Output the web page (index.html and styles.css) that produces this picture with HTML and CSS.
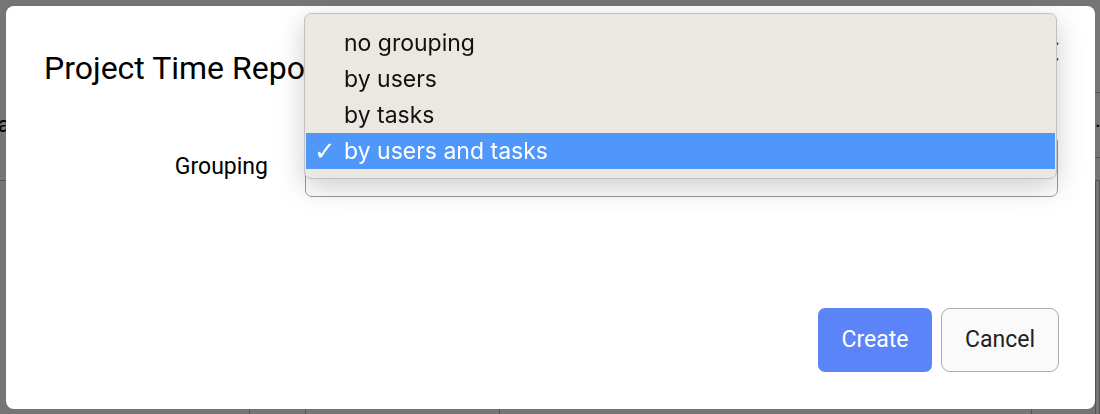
FILE: index.html
```html
<!DOCTYPE html>
<html lang="en">
<head>
    <meta charset="UTF-8">
    <meta name="viewport" content="width=device-width, initial-scale=1.0">
    <title>Project Time Report</title>
    <link rel="stylesheet" href="styles.css">
</head>
<body>
    <div class="page">
        <table class="page-table">
            <tr class="row-a">
                <td class="c1"></td><td class="c2"></td><td class="c3"></td><td class="c4"></td><td class="c5"></td><td class="c6"></td>
            </tr>
            <tr class="row-b">
                <td class="c1">Na</td><td class="c2"></td><td class="c3"></td><td class="c4"></td><td class="c5"></td><td class="c6">.</td>
            </tr>
            <tr class="row-c">
                <td class="c1"></td><td class="c2"></td><td class="c3"></td><td class="c4"></td><td class="c5"></td><td class="c6"></td>
            </tr>
            <tr class="row-d">
                <td class="c1"></td><td class="c2"></td><td class="c3"></td><td class="c4"></td><td class="c5"></td><td class="c6"></td>
            </tr>
        </table>
    </div>
    <div class="overlay"></div>

    <div class="modal">
        <div class="modal-header">
            <h1 class="modal-title">Project Time Report</h1>
            <a class="modal-close" href="javascript:void(0)">
                <svg width="20" height="19" viewBox="0 0 20 19"><path d="M1 1 L19 18 M19 1 L1 18" stroke="#333" stroke-width="2" fill="none"/></svg>
            </a>
        </div>
        <div class="modal-body">
            <div class="form-row">
                <label class="form-label">Grouping</label>
                <div class="form-select">by users and tasks</div>
            </div>
        </div>
        <div class="modal-footer">
            <a class="btn btn-primary" href="javascript:void(0)">Create</a>
            <a class="btn btn-default" href="javascript:void(0)">Cancel</a>
        </div>
    </div>

    <ul class="select-menu">
        <li class="select-item">no grouping</li>
        <li class="select-item">by users</li>
        <li class="select-item">by tasks</li>
        <li class="select-item active"><span class="select-check">&#10003;</span>by users and tasks</li>
    </ul>
</body>
</html>
```

FILE: styles.css
```css
* {
    margin: 0;
    padding: 0;
    list-style: none;
    text-decoration: none;
    box-sizing: border-box;
    -webkit-font-smoothing: antialiased;
}
html, body {
    width: 100%;
    height: 100%;
    overflow: hidden;
    font-family: Roboto, "Liberation Sans", Arial, sans-serif;
    background: #fff;
}
.page-table {
    width: 100%;
    border-collapse: collapse;
    table-layout: fixed;
}
.page-table td {
    padding: 0;
    font-size: 22px;
    color: #000;
    vertical-align: middle;
    white-space: nowrap;
    overflow: hidden;
}
.page-table .row-a td { height: 92px; }
.page-table .row-b td { height: 65px; }
.page-table .row-c td { height: 23px; }
.page-table .row-d td { height: 234px; }
.page-table .row-a .c6,
.page-table .row-b .c6,
.page-table .row-c td {
    border-bottom: 1px solid #b8b8b8;
}
.page-table .row-d td {
    border-right: 1px solid #b8b8b8;
}
.page-table .c1 { width: 249px; text-indent: -18px; }
.page-table .c2 { width: 56px; }
.page-table .c3 { width: 194px; }
.page-table .c4 { width: 532px; }
.page-table .c5 { width: 64px; }
.page-table .row-b .c6 { text-align: right; vertical-align: top; padding-top: 14px; }
.overlay {
    position: fixed;
    left: 0;
    top: 0;
    right: 0;
    bottom: 0;
    background: rgba(0, 0, 0, 0.54);
}
.modal {
    position: fixed;
    left: 6px;
    top: 6px;
    width: 1089px;
    height: 403px;
    border-radius: 8px;
    background: #fff;
    display: flex;
    flex-direction: column;
    padding: 44px 37px 37px 38px;
}
.modal-header {
    display: flex;
    justify-content: space-between;
    align-items: flex-start;
}
.modal-title {
    font-size: 32px;
    font-weight: 400;
    color: #000;
    line-height: 37px;
}
.modal-close {
    margin-top: -8px;
    margin-right: -1px;
    width: 20px;
    height: 19px;
}
.modal-body {
    padding-top: 48px;
}
.form-row {
    display: flex;
    align-items: center;
    gap: 37px;
}
.form-label {
    width: 224px;
    text-align: right;
    font-size: 23px;
    color: #000;
}
.form-select {
    flex: 1;
    height: 62px;
    border: 1px solid #999;
    border-radius: 7px;
    padding-left: 36px;
    line-height: 60px;
    font-family: Inter, "Noto Sans", sans-serif;
    font-size: 23px;
    color: #000;
}
.modal-footer {
    margin-top: auto;
    display: flex;
    justify-content: flex-end;
    gap: 9px;
}
.btn {
    height: 64px;
    border-radius: 7px;
    font-size: 23px;
    line-height: 62px;
    text-align: center;
    border: 1px solid transparent;
}
.btn-primary {
    width: 114px;
    background: #5b84f8;
    color: #fff;
}
.btn-default {
    width: 118px;
    margin-right: -1px;
    background: #fafafa;
    border-color: #aaa;
    border-radius: 9px;
    color: #222;
}
.select-menu {
    position: fixed;
    left: 304px;
    top: 13px;
    width: 753px;
    height: 166px;
    padding: 11px 1px 0;
    border: 1px solid #c2c0bc;
    border-radius: 7px;
    background: #ebe8e2;
    box-shadow: 0 8px 28px rgba(0, 0, 0, 0.2);
    font-family: Inter, "Noto Sans", sans-serif;
    font-size: 23px;
    color: #111;
}
.select-item {
    height: 36px;
    line-height: 36px;
    padding-left: 38px;
    position: relative;
}
.select-item.active {
    background: #4f97f9;
    color: #fff;
}
.select-check {
    position: absolute;
    left: 8px;
    top: 0;
    font-family: "DejaVu Sans", sans-serif;
    font-size: 26px;
    font-weight: 700;
}
```
